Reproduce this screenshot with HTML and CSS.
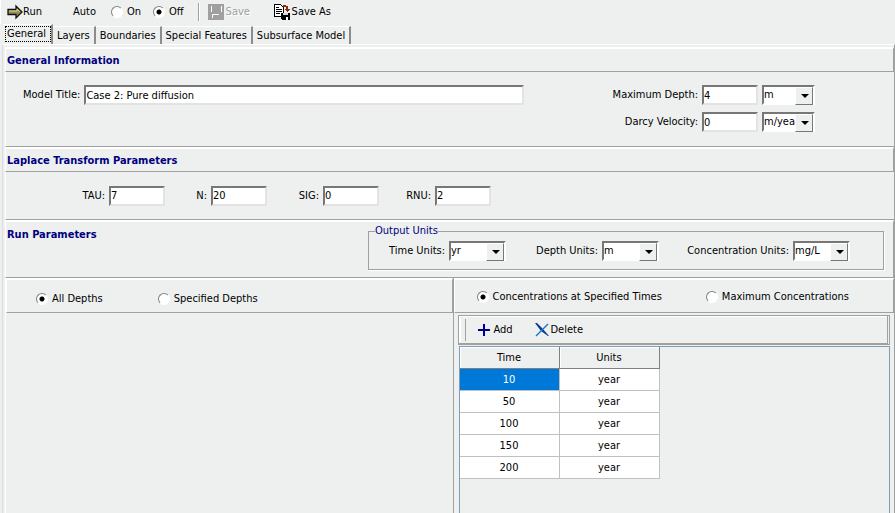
FILE: index.html
```html
<!DOCTYPE html>
<html lang="en">
<head>
    <meta charset="UTF-8">
    <meta name="viewport" content="width=device-width, initial-scale=1.0">
    <title>Case 2: Pure diffusion</title>
    <link rel="stylesheet" href="styles.css">
</head>
<body>

<!-- Toolbar -->
<div class="toolbar">
    <button class="tool-btn run-btn">
        <svg class="icon" width="16" height="16" viewBox="0 0 16 16">
            <path d="M1 5.500H9V2L15 8L9 14V10.500H1Z" fill="#8f8f4f" stroke="#111" stroke-width="1.300"/>
            <path d="M2 7H10V5L13 8" fill="none" stroke="#d8d8a0"/>
        </svg>
        Run
    </button>
    <span class="auto-label">Auto</span>
    <label class="radio auto-on"><input type="radio" name="auto"> On</label>
    <label class="radio"><input type="radio" name="auto" checked> Off</label>
    <span class="divider"></span>
    <button class="tool-btn save-btn" disabled>
        <svg class="icon" width="16" height="16" viewBox="0 0 16 16">
            <path d="M0 0H16V16H0Z" fill="#a0a0a0"/>
            <path d="M3.500 2V8M13.500 2V8M4.500 14V10.500H11" fill="none" stroke="#fff"/>
        </svg>
        Save
    </button>
    <button class="tool-btn save-as-btn">
        <svg class="icon" width="16" height="16" viewBox="0 0 16 16" shape-rendering="crispEdges">
            <path d="M0.500 0.500H6.500L9.500 3.500V12.500H0.500Z" fill="#fff" stroke="#000"/>
            <path d="M2 3.500H5M2 5.500H8M2 7.500H8M2 9.500H6" stroke="#000"/>
            <path d="M9 1H12V2H14V5H16L13 8L10 5H12V3H9Z" fill="#8c2a12"/>
            <path d="M7 9H16V16H8V15H7Z" fill="#000"/>
            <path d="M9 9H14V11H9Z" fill="#d8d8d8"/>
            <path d="M12 13H14V16H12Z" fill="#fff"/>
        </svg>
        Save As
    </button>
</div>

<!-- Tabs -->
<div class="tabs">
    <button class="tab active">General</button>
    <button class="tab">Layers</button>
    <button class="tab">Boundaries</button>
    <button class="tab">Special Features</button>
    <button class="tab">Subsurface Model</button>
</div>

<div class="page">
    <!-- General Information -->
    <h3 class="section-title">General Information</h3>
    <div class="section general">
        <div class="field">
            <label for="title">Model Title:</label>
            <input type="text" class="title-input" id="title" value="Case 2: Pure diffusion">
        </div>
        <div class="depths">
            <div class="field">
                <label for="depth">Maximum Depth:</label>
                <input type="text" id="depth" value="4">
                <span class="combo"><select aria-label="Depth unit"><option>m</option></select></span>
            </div>
            <div class="field">
                <label for="velocity">Darcy Velocity:</label>
                <input type="text" id="velocity" value="0">
                <span class="combo"><select aria-label="Velocity unit"><option>m/year</option></select></span>
            </div>
        </div>
    </div>

    <!-- Laplace Transform Parameters -->
    <h3 class="section-title">Laplace Transform Parameters</h3>
    <div class="section laplace">
        <div class="field"><label for="tau">TAU:</label><input type="text" id="tau" value="7"></div>
        <div class="field"><label for="n">N:</label><input type="text" id="n" value="20"></div>
        <div class="field"><label for="sig">SIG:</label><input type="text" id="sig" value="0"></div>
        <div class="field"><label for="rnu">RNU:</label><input type="text" id="rnu" value="2"></div>
    </div>

    <!-- Run Parameters -->
    <div class="run-params">
        <h3>Run Parameters</h3>
        <fieldset class="units">
            <legend>Output Units</legend>
            <div class="units-row">
                <div class="field">
                    <label for="time-units">Time Units:</label>
                    <span class="combo"><select id="time-units"><option>yr</option></select></span>
                </div>
                <div class="field">
                    <label for="depth-units">Depth Units:</label>
                    <span class="combo"><select id="depth-units"><option>m</option></select></span>
                </div>
                <div class="field">
                    <label for="conc-units">Concentration Units:</label>
                    <span class="combo"><select id="conc-units"><option>mg/L</option></select></span>
                </div>
            </div>
        </fieldset>
    </div>

    <div class="panes">
        <div class="pane">
            <div class="pane-head depth-options">
                <label class="radio"><input type="radio" name="depths" checked> All Depths</label>
                <label class="radio"><input type="radio" name="depths"> Specified Depths</label>
            </div>
        </div>
        <div class="pane times">
            <div class="pane-head time-options">
                <label class="radio"><input type="radio" name="times" checked> Concentrations at Specified Times</label>
                <label class="radio"><input type="radio" name="times"> Maximum Concentrations</label>
            </div>
            <div class="grid-toolbar">
                <span class="grip"></span>
                <button class="tool-btn add-btn">
                    <svg class="icon" width="12" height="12" viewBox="0 0 12 12">
                        <path d="M6 0V12M0 6H12" stroke="#00008b" stroke-width="2"/>
                    </svg>
                    Add
                </button>
                <button class="tool-btn delete-btn">
                    <svg class="icon" width="14" height="14" viewBox="0 0 14 14">
                        <path d="M0 0H2L8 6L14 13H13L6 8Z" fill="#0a3c96"/>
                        <path d="M13 1L7 7L1 13" fill="none" stroke="#1a78d0" stroke-width="1.500"/>
                    </svg>
                    Delete
                </button>
            </div>
            <div class="grid-box">
                <table class="grid">
                    <thead>
                        <tr><th>Time</th><th>Units</th></tr>
                    </thead>
                    <tbody>
                        <tr><td class="selected">10</td><td>year</td></tr>
                        <tr><td>50</td><td>year</td></tr>
                        <tr><td>100</td><td>year</td></tr>
                        <tr><td>150</td><td>year</td></tr>
                        <tr><td>200</td><td>year</td></tr>
                    </tbody>
                </table>
            </div>
        </div>
    </div>
</div>

</body>
</html>
```
FILE: styles.css
```css
* {
    margin: 0;
    padding: 0;
    box-sizing: border-box;
}

body {
    font-family: Tahoma, 'DejaVu Sans Condensed', 'Noto Sans', sans-serif;
    font-size: 11px;
    line-height: 14px;
    color: #000;
    background: #eef0ef;
    min-height: 100vh;
    display: flex;
    flex-direction: column;
    overflow: hidden;
}

button, input, select {
    font: inherit;
    color: inherit;
}

/* Toolbar */
.toolbar {
    display: flex;
    align-items: center;
    height: 24px;
    padding-left: 6px;
    border-left: 1px solid #fff;
}

.tool-btn {
    display: flex;
    align-items: center;
    background: none;
    border: none;
    white-space: nowrap;
}

.tool-btn:disabled {
    color: #a0a0a0;
    text-shadow: 1px 1px #fff;
}

.icon {
    flex: none;
}

.run-btn {
    width: 66px;
}

.auto-label {
    width: 38px;
}

.auto-on {
    width: 42px;
}

.divider {
    width: 2px;
    height: 18px;
    margin: 0 8px 0 14px;
    border-left: 1px solid #a0a0a0;
    border-right: 1px solid #fff;
}

.save-btn {
    width: 66px;
}

.save-btn, .save-as-btn, .delete-btn {
    gap: 2px;
}

/* Radio buttons */
.radio {
    display: flex;
    align-items: center;
    gap: 4px;
    white-space: nowrap;
}

.radio input {
    appearance: none;
    width: 12px;
    height: 12px;
    border: 1px solid;
    border-color: #808080 #fff #fff #808080;
    border-radius: 50%;
    background: #fff;
}

.radio input:checked {
    background: radial-gradient(circle, #000 2px, #fff 3px);
}

/* Tabs */
.tabs {
    display: flex;
    align-items: flex-end;
    height: 20px;
    padding-left: 3px;
}

.tab {
    height: 18px;
    padding: 0 4px;
    background: none;
    border: none;
    border-top: 1px solid #fff;
    border-right: 2px solid #8c8c8c;
    white-space: nowrap;
}

.tab.active {
    height: 20px;
    padding: 0 5px 2px 4px;
    outline: 1px dotted #000;
    outline-offset: -3px;
}

/* Page */
.page {
    flex: 1;
    display: flex;
    flex-direction: column;
    margin-left: 2px;
    padding-top: 2px;
    padding-left: 2px;
    border-top: 1px solid #fff;
    border-left: 1px solid #dcdcdc;
    border-right: 1px solid #a0a0a0;
}

h3 {
    font-size: 11px;
    color: #000080;
}

.section-title {
    height: 25px;
    padding: 5px 0 0 1px;
    border: 1px solid #a0a0a0;
    border-top: 2px solid #fff;
    border-left-color: #fff;
}

.section {
    border-left: 1px solid #fff;
    border-bottom: 1px solid #a0a0a0;
}

.field {
    display: flex;
    align-items: center;
    justify-content: flex-end;
    gap: 4px;
    white-space: nowrap;
}

input[type="text"] {
    width: 56px;
    height: 20px;
    border: 2px solid;
    border-color: #777 #e3e3e3 #e3e3e3 #777;
    background: #fff;
}

input.title-input {
    width: 440px;
}

.general {
    display: flex;
    justify-content: space-between;
    align-items: flex-start;
    height: 75px;
    padding: 13px 79px 0 17px;
}

.depths {
    display: flex;
    flex-direction: column;
    gap: 7px;
}

/* Combo boxes */
.combo {
    position: relative;
    width: 53px;
}

.combo select {
    display: block;
    appearance: none;
    width: 100%;
    height: 20px;
    padding: 0 16px 0 0;
    border: 2px solid;
    border-color: #777 #fff #fff #777;
    border-radius: 0;
    background: #fff;
}

.combo::before {
    content: "";
    position: absolute;
    top: 2px;
    right: 2px;
    width: 16px;
    height: 16px;
    background: #eef0ef;
    border: 1px solid;
    border-color: #fff #777 #777 #fff;
    pointer-events: none;
}

.combo::after {
    content: "";
    position: absolute;
    top: 9px;
    right: 6px;
    border: 4px solid transparent;
    border-top-color: #000;
    border-bottom: none;
    pointer-events: none;
}

.laplace {
    display: grid;
    grid-template-columns: 159px 102px 112px 112px;
    align-items: center;
    height: 48px;
}

/* Run parameters */
.run-params {
    display: flex;
    justify-content: space-between;
    height: 58px;
    padding: 2px 9px 0 1px;
    border: 1px solid #a0a0a0;
    border-top: 2px solid #fff;
    border-left-color: #fff;
}

.run-params h3 {
    padding-top: 4px;
}

.units {
    width: 516px;
    height: 46px;
    padding: 0 0 0 6px;
    border: 1px solid #a0a0a0;
    box-shadow: 1px 1px #fff;
}

.units legend {
    color: #000080;
}

.units-row {
    display: grid;
    grid-template-columns: 131px 153px 191px;
    padding-top: 3px;
}

.units .combo {
    width: 57px;
}

/* Lower panes */
.panes {
    flex: 1;
    display: grid;
    grid-template-columns: 447fr 441fr;
}

.pane {
    display: flex;
    flex-direction: column;
    border-left: 1px solid #fff;
}

.pane-head {
    display: flex;
    align-items: center;
    height: 35px;
    border: 1px solid #a0a0a0;
    border-top: 2px solid #fff;
    border-left-color: #fff;
}

.depth-options {
    gap: 55px;
    padding-left: 29px;
    padding-top: 5px;
}

.times {
    border-left-color: #a0a0a0;
}

.time-options {
    gap: 44px;
    padding-left: 22px;
    padding-top: 1px;
}

.grid-toolbar {
    display: flex;
    align-items: center;
    height: 30px;
    margin: 2px 4px 0 4px;
    border: 1px solid #a0a0a0;
    border-right: 3px double #a0a0a0;
    border-bottom-width: 2px;
    box-shadow: inset 1px 1px #fff;
}

.grip {
    width: 7px;
    height: 22px;
    margin-right: 12px;
    border-left: 2px solid #fff;
    border-right: 1px solid #a0a0a0;
}

.add-btn {
    gap: 4px;
    width: 57px;
}

.grid-box {
    flex: 1;
    margin: 1px 4px 0 5px;
    border: 1px solid #7f9db9;
    border-bottom: none;
}

.grid {
    width: 200px;
    table-layout: fixed;
    border-collapse: separate;
    border-spacing: 0;
    text-align: center;
}

.grid th {
    height: 22px;
    font-weight: normal;
    border-right: 1px solid #808080;
    border-bottom: 1px solid #808080;
    box-shadow: inset 1px 1px #fff;
}

.grid td {
    height: 22px;
    background: #fff;
    border-right: 1px solid #c0c0c0;
    border-bottom: 1px solid #c0c0c0;
}

.grid td.selected {
    background: #0078d7;
    color: #fff;
}
```
